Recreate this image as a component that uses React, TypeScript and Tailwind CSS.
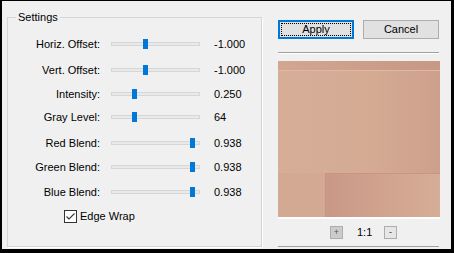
const rows = [
  { label: "Horiz. Offset:", value: "-1.000", thumb: "left-[32px]", gap: "mt-[16px]" },
  { label: "Vert. Offset:", value: "-1.000", thumb: "left-[32px]", gap: "mt-[6px]" },
  { label: "Intensity:", value: "0.250", thumb: "left-[21px]", gap: "mt-[4px]" },
  { label: "Gray Level:", value: "64", thumb: "left-[21px]", gap: "mt-[3px]" },
  { label: "Red Blend:", value: "0.938", thumb: "left-[79px]", gap: "mt-[6px]" },
  { label: "Green Blend:", value: "0.938", thumb: "left-[79px]", gap: "mt-[4px]" },
  { label: "Blue Blend:", value: "0.938", thumb: "left-[79px]", gap: "mt-[5px]" },
];

const SliderRow = ({ label, value, thumb, gap }: (typeof rows)[number]) => (
  <div className={`flex items-center h-[20px] ${gap}`}>
    <div className="w-[92px] text-right whitespace-nowrap">{label}</div>
    <div className="relative ml-[11px] w-[89px] h-[20px] flex items-center">
      <div className="w-full h-[4px] bg-[#e7eaea] border border-[#d6d6d6]" />
      <div className={`absolute top-[5px] w-[5px] h-[10px] bg-[#0078d7] ${thumb}`} />
    </div>
    <div className="ml-[14px]">{value}</div>
  </div>
);

const Preview = () => (
  <svg width="162" height="156" viewBox="0 0 162 156" className="block">
    <defs>
      <linearGradient id="base" x1="0" x2="1" y1="0" y2="0">
        <stop offset="0" stopColor="#d6ae97" />
        <stop offset="0.6" stopColor="#d4aa93" />
        <stop offset="1" stopColor="#cda08b" />
      </linearGradient>
      <linearGradient id="top" x1="0" x2="1" y1="0" y2="0">
        <stop offset="0" stopColor="#d2a690" />
        <stop offset="1" stopColor="#c79884" />
      </linearGradient>
      <linearGradient id="low" x1="0" x2="1" y1="0" y2="0">
        <stop offset="0" stopColor="#c99886" />
        <stop offset="0.5" stopColor="#d0a38e" />
        <stop offset="1" stopColor="#d6ad96" />
      </linearGradient>
    </defs>
    <rect x="0" y="0" width="162" height="156" fill="url(#base)" />
    <rect x="0" y="0" width="162" height="9" fill="url(#top)" />
    <rect x="0" y="9" width="162" height="1" fill="#dcbaa5" />
    <rect x="47" y="10" width="1" height="102" fill="#d9b49e" opacity="0.35" />
    <rect x="0" y="112" width="47" height="44" fill="#d3a993" />
    <rect x="47" y="112" width="115" height="44" fill="url(#low)" />
    <rect x="47" y="112" width="115" height="1" fill="#c89784" />
    <rect x="47" y="112" width="1" height="44" fill="#c89784" />
  </svg>
);

export default function App() {
  return (
    <div className="w-[454px] h-[253px] flex bg-[#f0f0f0] border-black border-t border-l-2 border-r-[3px] border-b-4 font-['Liberation_Sans',Arial,sans-serif] text-[11px] text-black leading-none">
      <div className="relative ml-[5px] mt-[16px] w-[255px] h-[230px] border border-[#d5d5d5] shadow-[1px_1px_0_#ffffff]">
        <div className="absolute -top-[7px] left-[8px] px-[2px] bg-[#f0f0f0] leading-[13px]">Settings</div>
        {rows.map((r) => (
          <SliderRow key={r.label} {...r} />
        ))}
        <div className="flex items-center h-[20px] mt-[4px] ml-[56px]">
          <div className="w-[13px] h-[13px] border border-[#333333] bg-white flex items-center justify-center">
            <svg width="11" height="11" viewBox="0 0 11 11">
              <path d="M1.5 5.5 L4 8 L9.5 2.5" fill="none" stroke="#333333" strokeWidth="1.1" />
            </svg>
          </div>
          <span className="ml-[3px]">Edge Wrap</span>
        </div>
      </div>

      <div className="ml-[16px] w-[162px] flex flex-col">
        <div className="flex gap-[9px] mt-[19px]">
          <button className="relative w-[76px] h-[19px] border-2 border-[#0078d7] bg-[#e1e1e1] flex items-center justify-center">
            <span className="absolute inset-[1px] border border-dotted border-black" />
            Apply
          </button>
          <button className="w-[76px] h-[19px] border border-[#adadad] bg-[#e1e1e1] flex items-center justify-center">
            Cancel
          </button>
        </div>
        <div className="mt-[13px] w-[161px] h-[2px] border-t border-[#a0a0a0] border-b border-b-white" />
        <div className="mt-[7px] w-[162px] border-b-2 border-white">
          <Preview />
        </div>
        <div className="flex items-center mt-[7px] h-[13px] pl-[52px]">
          <div className="w-[13px] h-[13px] bg-[#cccccc] border border-[#adadad] flex items-center justify-center text-[9px] text-[#555555]">
            +
          </div>
          <div className="ml-[14px] w-[15px] text-center">1:1</div>
          <div className="ml-[12px] w-[13px] h-[13px] bg-[#e6e6e6] border border-[#adadad] flex items-center justify-center text-[9px] text-[#333333]">
            -
          </div>
        </div>
        <div className="mt-[7px] w-[161px] h-px bg-[#a0a0a0]" />
      </div>
    </div>
  );
}
